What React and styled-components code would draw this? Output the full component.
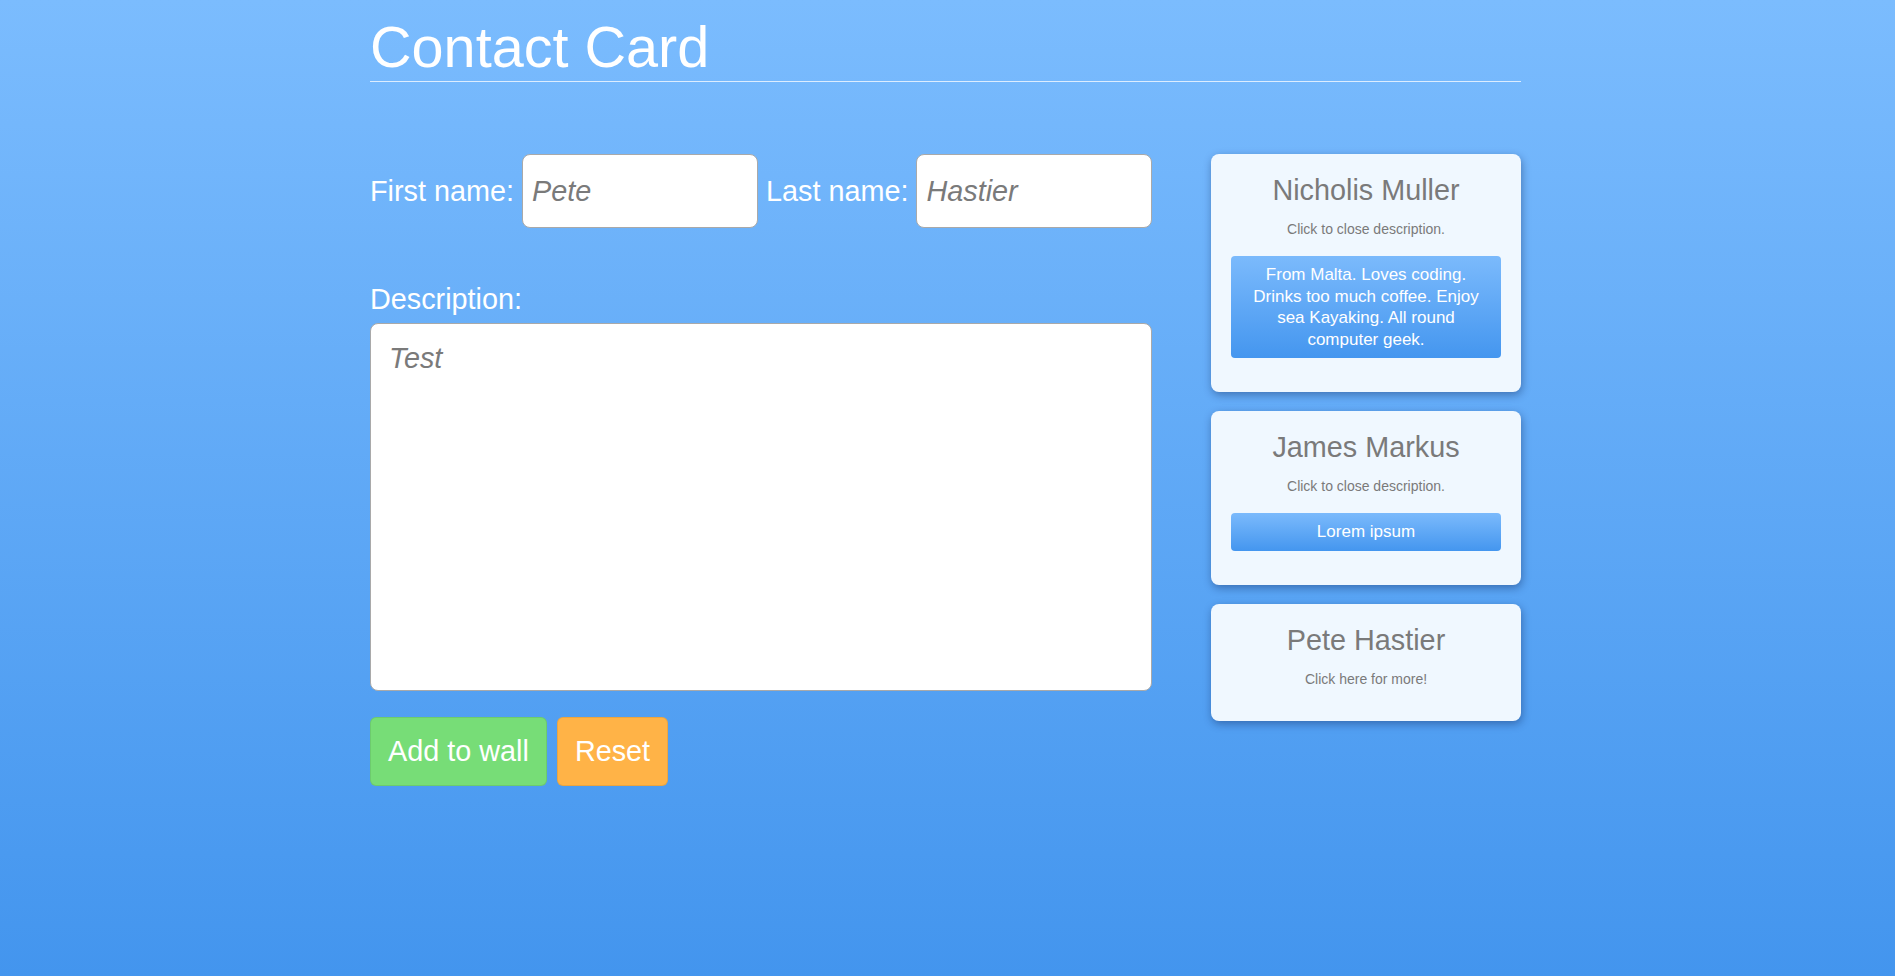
import React from 'react'
import styled, { createGlobalStyle } from 'styled-components'

const GlobalStyle = createGlobalStyle`
  html {
    height: 100%;
    background: linear-gradient(to bottom, #7bbcfe 0%, #4395ee 100%);
  }

  body {
    margin: 0;
    font-family: 'Liberation Sans', Arial, sans-serif;
    font-size: 16px;
  }
`

const Shell = styled.div`
  padding-right: 4px;
`

const Page = styled.div`
  width: 1151px;
  margin: 0 auto;
`

const Title = styled.h1`
  margin: 14px 0 0;
  padding-bottom: 1px;
  font-size: 57.6px;
  font-weight: normal;
  line-height: normal;
  color: #fff;
  border-bottom: 1px solid rgba(255, 255, 255, 0.75);
`

const Main = styled.div`
  display: grid;
  grid-template-columns: 782px 310px;
  column-gap: 59px;
  align-items: start;
  margin-top: 72px;
`

const FormColumn = styled.form`
  display: flex;
  flex-direction: column;
`

const NameRow = styled.div`
  display: flex;
  align-items: baseline;
  gap: 8px;
`

const FieldLabel = styled.label`
  font-size: 28.8px;
  line-height: normal;
  color: #fff;
  white-space: nowrap;
`

const TextInput = styled.input`
  box-sizing: border-box;
  width: 236px;
  height: 74px;
  padding: 0 9px;
  border: 1px solid #a9a9a9;
  border-radius: 8px;
  background: #fff;
  font-family: inherit;
  font-size: 28.8px;
  font-style: italic;
  color: #7a7a7a;
  outline: none;
`

const DescriptionBlock = styled.div`
  display: flex;
  flex-direction: column;
  gap: 7px;
  margin-top: 55px;
`

const TextArea = styled.textarea`
  box-sizing: border-box;
  width: 100%;
  height: 368px;
  padding: 18px 18px;
  border: 1px solid #a9a9a9;
  border-radius: 8px;
  background: #fff;
  font-family: inherit;
  font-size: 28.8px;
  font-style: italic;
  line-height: normal;
  color: #7a7a7a;
  resize: none;
  outline: none;
`

const ButtonRow = styled.div`
  display: flex;
  gap: 10px;
  margin-top: 26px;
`

const ActionButton = styled.button`
  height: 69px;
  padding: 0 17px;
  border: 1px solid rgba(0, 0, 0, 0.08);
  border-radius: 6px;
  background: ${(p) => p.$color};
  font-family: inherit;
  font-size: 28.8px;
  color: #fff;
  cursor: pointer;
`

const Wall = styled.div`
  display: flex;
  flex-direction: column;
  gap: 19px;
`

const Card = styled.div`
  padding: 20px 20px 20px;
  background: #f0f8ff;
  border-radius: 8px;
  box-shadow: 1px 3px 9px rgba(10, 30, 80, 0.4);
  text-align: center;
  cursor: pointer;
`

const CardName = styled.h2`
  margin: 0;
  font-size: 28.8px;
  font-weight: normal;
  line-height: normal;
  color: #7a7a7a;
`

const CardHint = styled.p`
  margin: 14px 0;
  font-size: 14px;
  line-height: normal;
  color: #7a7a7a;
`

const CardBody = styled.div`
  margin: 19px 0 14px;
  padding: 8px 12px;
  border-radius: 4px;
  background: linear-gradient(to bottom, #7bbafc 0%, #4496ef 100%);
  font-size: 17px;
  line-height: 21.5px;
  color: #fff;
`

const contacts = [
  {
    name: 'Nicholis Muller',
    open: true,
    text: 'From Malta. Loves coding. Drinks too much coffee. Enjoy sea Kayaking. All round computer geek.',
  },
  { name: 'James Markus', open: true, text: 'Lorem ipsum' },
  { name: 'Pete Hastier', open: false, text: 'Test' },
]

const ContactCard = ({ name, open, text }) => (
  <Card>
    <CardName>{name}</CardName>
    <CardHint>{open ? 'Click to close description.' : 'Click here for more!'}</CardHint>
    {open && <CardBody>{text}</CardBody>}
  </Card>
)

export default function App() {
  return (
    <Shell>
      <GlobalStyle />
      <Page>
        <Title>Contact Card</Title>
        <Main>
          <FormColumn onSubmit={(e) => e.preventDefault()}>
            <NameRow>
              <FieldLabel htmlFor="first">First name:</FieldLabel>
              <TextInput id="first" defaultValue="Pete" />
              <FieldLabel htmlFor="last">Last name:</FieldLabel>
              <TextInput id="last" defaultValue="Hastier" />
            </NameRow>
            <DescriptionBlock>
              <FieldLabel htmlFor="desc">Description:</FieldLabel>
              <TextArea id="desc" defaultValue="Test" />
            </DescriptionBlock>
            <ButtonRow>
              <ActionButton type="submit" $color="#77dd77">
                Add to wall
              </ActionButton>
              <ActionButton type="reset" $color="#ffb347">
                Reset
              </ActionButton>
            </ButtonRow>
          </FormColumn>
          <Wall>
            {contacts.map((c) => (
              <ContactCard key={c.name} {...c} />
            ))}
          </Wall>
        </Main>
      </Page>
    </Shell>
  )
}
